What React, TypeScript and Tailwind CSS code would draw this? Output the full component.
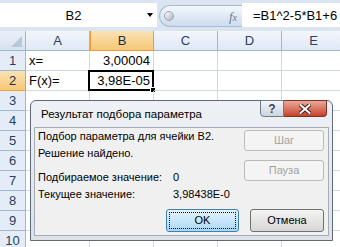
const cols = ["A", "B", "C", "D", "E"];
const rows = [1, 2, 3, 4, 5, 6, 7, 8, 9, 10];

const cells: Record<string, string> = {
  A1: "x=",
  B1: "3,00004",
  A2: "F(x)=",
  B2: "3,98E-05",
};

function FormulaBar() {
  return (
    <div className="flex h-[31px] bg-[#dbe5f1] pt-[3px] pb-[4px]">
      <div className="flex w-[157px] shrink-0 items-center bg-white pr-[4px]">
        <span className="flex-1 text-center text-[13px] leading-none text-black">B2</span>
        <span className="h-0 w-0 border-x-[3.5px] border-t-[4px] border-x-transparent border-t-black" />
      </div>
      <div className="flex w-[85px] shrink-0 items-stretch pl-[2px] pt-[2px]">
        <div className="flex flex-1 items-center rounded-l-full border border-r-0 border-[#a7bcd8] bg-gradient-to-b from-[#f4f8fd] to-[#cddbee] pl-[4px] pr-[5px]">
          <span className="h-[10px] w-[10px] rounded-full border border-[#9aa6b5] bg-gradient-to-br from-[#ffffff] to-[#a9b3c0]" />
          <span className="ml-auto font-['Liberation_Serif',serif] text-[13px] italic leading-none text-[#6c7b90]">
            f<span className="text-[10px]">x</span>
          </span>
        </div>
      </div>
      <div className="flex flex-1 items-center whitespace-nowrap bg-white pl-[11px] text-[13px] leading-none text-black">
        =B1^2-5*B1+6
      </div>
    </div>
  );
}

function Sheet() {
  return (
    <div className="flex flex-col text-[13px]">
      <div className="flex h-[20px]">
        <div className="relative w-[26px] shrink-0 border-r border-b border-[#9eb6ce] bg-gradient-to-b from-[#eaf0f8] to-[#d7e2f0]">
          <svg className="absolute right-[3px] bottom-[3px]" width="11" height="11" viewBox="0 0 11 11">
            <polygon points="11,0 11,11 0,11" fill="#b7c8dd" />
          </svg>
        </div>
        {cols.map((c) =>
          c === "B" ? (
            <div
              key={c}
              className="flex w-[64px] shrink-0 items-center justify-center border-x border-b border-[#f29a3c] bg-gradient-to-b from-[#fbe3b4] to-[#f5c874] text-[#1e2f45]"
            >
              {c}
            </div>
          ) : (
            <div
              key={c}
              className="flex w-[64px] shrink-0 items-center justify-center border-r border-b border-[#9eb6ce] bg-gradient-to-b from-[#f3f7fc] to-[#dfe8f4] text-[#27415f]"
            >
              {c}
            </div>
          ),
        )}
      </div>
      {rows.map((r) => (
        <div key={r} className="flex h-[20px]">
          {r === 2 ? (
            <div className="flex w-[26px] shrink-0 items-center justify-center border-r border-b border-[#f29a3c] bg-gradient-to-b from-[#fbe3b4] to-[#f5c874] text-[#1e2f45]">
              {r}
            </div>
          ) : (
            <div className="flex w-[26px] shrink-0 items-center justify-center border-r border-b border-[#9eb6ce] bg-[#e4ecf7] text-[#27415f]">
              {r}
            </div>
          )}
          {cols.map((c) => {
            const id = `${c}${r}`;
            const v = cells[id];
            return (
              <div
                key={id}
                className={`relative flex w-[64px] shrink-0 items-center border-r border-b border-[#d0d7e5] px-[3px] text-black ${
                  c === "B" ? "justify-end" : "justify-start"
                }`}
              >
                {v}
                {id === "B2" && (
                  <>
                    <span className="absolute -top-[1px] -left-[2px] -right-[1px] -bottom-[1px] border-2 border-black" />
                    <span className="absolute -right-[3px] -bottom-[3px] h-[6px] w-[6px] border border-white bg-black" />
                  </>
                )}
              </div>
            );
          })}
        </div>
      ))}
    </div>
  );
}

function GoalSeekDialog() {
  return (
    <div className="absolute left-[30px] top-[100px] flex h-[141px] w-[303px] flex-col rounded-t-[6px] border border-[#5e6a78] bg-gradient-to-b from-[#eef1f5] to-[#dde2e8] text-[11px] text-black">
      <div className="relative flex h-[26px] shrink-0 items-center pl-[10px] pt-[2px] text-[11.5px]">
        Результат подбора параметра
        <div className="absolute right-[5px] -top-[1px] flex">
          <div className="flex h-[17px] w-[24px] items-center justify-center rounded-bl-[4px] border border-[#6d7a8a] bg-gradient-to-b from-[#f4f6f9] to-[#ccd4de] text-[12px] font-bold leading-none text-[#3b4654]">
            ?
          </div>
          <div className="flex h-[17px] w-[43px] items-center justify-center rounded-br-[4px] border border-l-0 border-[#7a3325] bg-gradient-to-b from-[#e9a898] to-[#c4422b]">
            <svg width="12" height="10" viewBox="0 0 12 10">
              <path d="M1.5 1 L10.5 9 M10.5 1 L1.5 9" stroke="#4a1a12" strokeWidth="4" strokeLinecap="square" />
              <path d="M1.5 1 L10.5 9 M10.5 1 L1.5 9" stroke="#ffffff" strokeWidth="2" strokeLinecap="square" />
            </svg>
          </div>
        </div>
      </div>
      <div className="mx-[3px] mb-[4px] flex flex-1 flex-col border border-[#a3acb7] bg-[#f0f0f0] pl-[3px] pr-[4px]">
        <div className="flex">
          <div className="flex flex-1 flex-col leading-[17px]">
            <span>Подбор параметра для ячейки B2.</span>
            <span>Решение найдено.</span>
            <div className="mt-[7px] flex">
              <span className="w-[135px] shrink-0">Подбираемое значение:</span>
              <span>0</span>
            </div>
            <div className="flex">
              <span className="w-[135px] shrink-0">Текущее значение:</span>
              <span>3,98438E-0</span>
            </div>
          </div>
          <div className="mt-[2px] flex w-[80px] shrink-0 flex-col gap-[9px]">
            <div className="flex h-[21px] items-center justify-center rounded-[3px] border border-[#b8bcc0] bg-[#f4f4f4] text-[#a3a3a3]">
              Шаг
            </div>
            <div className="flex h-[21px] items-center justify-center rounded-[3px] border border-[#b8bcc0] bg-[#f4f4f4] text-[#a3a3a3]">
              Пауза
            </div>
          </div>
        </div>
        <div className="mt-[6px] flex justify-end gap-[11px]">
          <div className="flex h-[23px] w-[73px] items-center justify-center rounded-[3px] border border-[#3c7fb1] bg-gradient-to-b from-[#e5f4fc] to-[#a9d8f5] p-[2px]">
            <div className="flex h-full w-full items-center justify-center border border-dotted border-black">OK</div>
          </div>
          <div className="flex h-[23px] w-[74px] items-center justify-center rounded-[3px] border border-[#707070] bg-gradient-to-b from-[#f4f4f4] to-[#d6d6d6]">
            Отмена
          </div>
        </div>
      </div>
    </div>
  );
}

export default function App() {
  return (
    <div className="relative h-[247px] w-[340px] overflow-hidden bg-white font-['Liberation_Sans',Arial,sans-serif]">
      <FormulaBar />
      <Sheet />
      <GoalSeekDialog />
    </div>
  );
}
